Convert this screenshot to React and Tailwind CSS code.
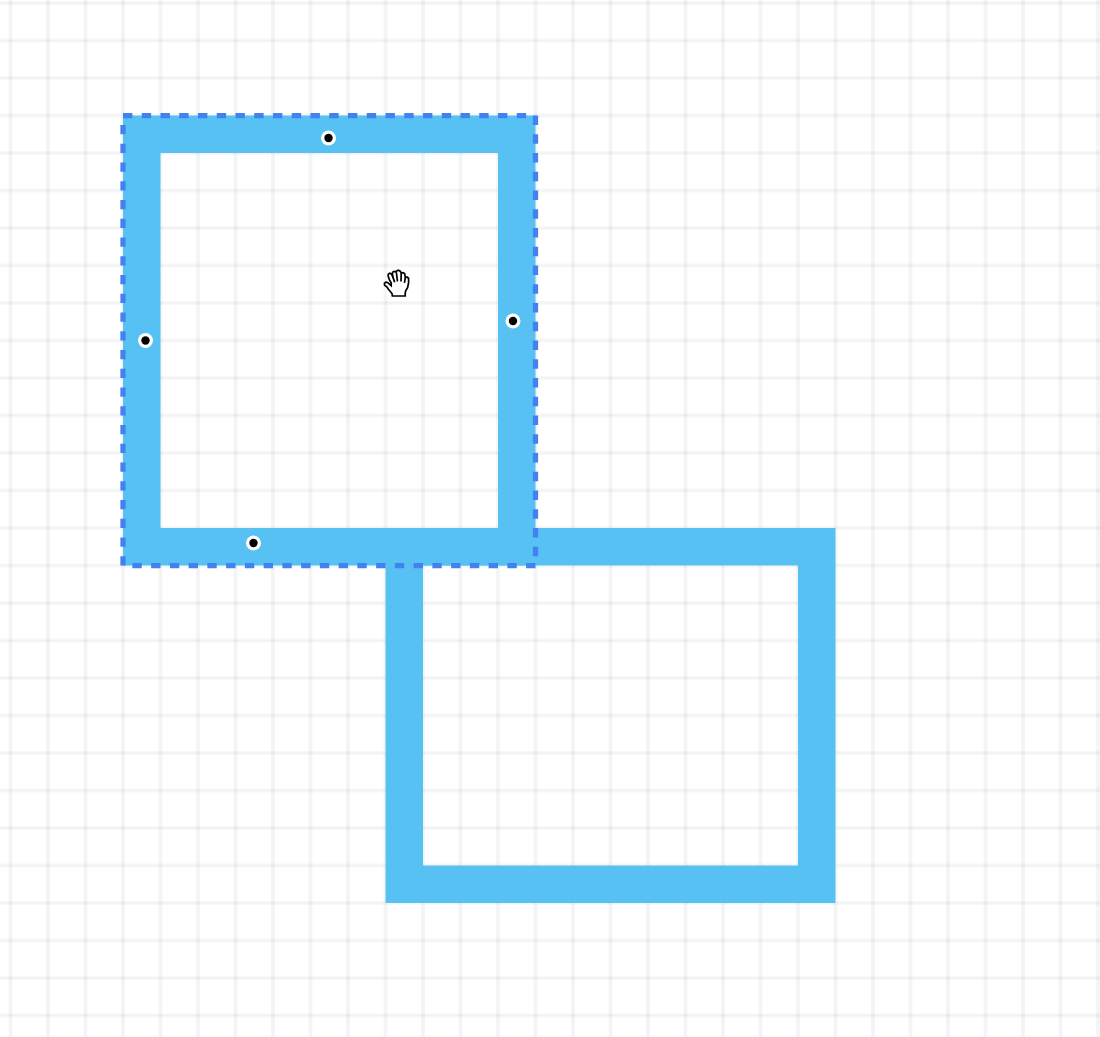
const CELL = 25;

const frames = [
  { id: "room-b", x: 10, y: 14, w: 12, h: 10 },
  { id: "room-a", x: 3, y: 3, w: 11, h: 12 },
];

const anchors = [
  { x: 212, y: 90 },
  { x: 335, y: 212 },
  { x: 90, y: 225 },
  { x: 162, y: 360 },
];

function Frame({ x, y, w, h }) {
  return (
    <rect
      x={(x + 0.5) * CELL}
      y={(y + 0.5) * CELL}
      width={(w - 1) * CELL}
      height={(h - 1) * CELL}
      fill="none"
      stroke="#57c1f4"
      strokeWidth={CELL}
    />
  );
}

function HandCursor() {
  return (
    <g transform="translate(383 269)" stroke="#000" strokeWidth="1.7" strokeLinecap="square" strokeLinejoin="miter">
      <path
        d="M9.4 27 L9 24.5 L5.6 20.6 L4 18 L1.5 16 L1.5 14.2 L2.8 13.2 L4.6 13.6 L8.2 16.6 L8.2 14 L6.4 10.6 L5.2 7.4 L5.2 5.4 L6.6 4.2 L8.4 5 L10 8.4 L9.4 5 L9.6 3.2 L11 2.4 L13 2.8 L13.6 2 L15.4 1.2 L17.2 2.2 L18.4 4 L20 3.6 L21.6 4.6 L22.4 8.6 L24 8 L25.6 9.2 L25.6 13.6 L24.6 18.6 L22.8 21.6 L22.2 24 L22.2 27 Z"
        fill="#fff"
      />
      <path d="M10 8.4 L11.4 12.4 M13.4 4 L14.4 11.6 M18.2 4.8 L18 11.6 M22.2 9.4 L21.6 13" fill="none" />
    </g>
  );
}

export default function App() {
  return (
    <main className="h-screen w-full overflow-hidden bg-white">
      <svg className="block h-full w-full" role="img" aria-label="Floor plan canvas">
        <defs>
          <pattern id="grid" width={CELL} height={CELL} patternUnits="userSpaceOnUse" patternTransform="scale(1.5) translate(-5.5 -10.5)">
            <g fill="none" stroke="#5b6b7b" strokeOpacity="0.08" strokeWidth="2.4">
              <path d="M12.5 0 V25" />
              <path d="M0 12.5 H25" />
            </g>
          </pattern>
        </defs>
        <rect width="100%" height="100%" fill="url(#grid)" />
        <g transform="scale(1.5) translate(7 2)">
          {frames.map(({ id, ...box }) => (
            <Frame key={id} {...box} />
          ))}
          <path d="M75 75 H350 V375 H75 Z" fill="none" stroke="#4381f1" strokeWidth="3.5" strokeDasharray="6.25 6.25" />
          {anchors.map(({ x, y }) => (
            <g key={`${x}-${y}`}>
              <circle cx={x} cy={y} r="5" fill="#fff" />
              <circle cx={x} cy={y} r="2.8" fill="#000" />
            </g>
          ))}
        </g>
        <HandCursor />
      </svg>
    </main>
  );
}
